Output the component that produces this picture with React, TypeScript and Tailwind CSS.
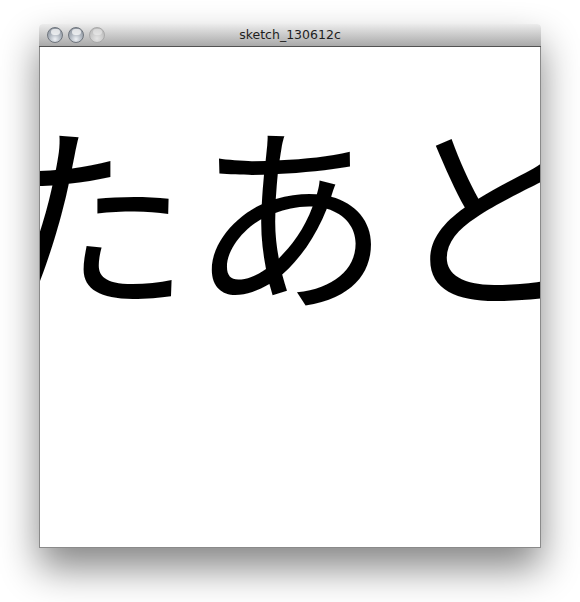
import * as React from "react"

function TrafficLight({ dim }: { dim?: boolean }) {
  return (
    <div
      className={`h-[16px] w-[16px] rounded-full border ${
        dim
          ? "border-[#a9a9a9] bg-[radial-gradient(circle_at_50%_75%,#e4e4e4_0%,#c6c6c6_55%,#b4b4b4_100%)]"
          : "border-[#6f757d] bg-[radial-gradient(circle_at_50%_80%,#eef1f5_0%,#aeb5be_45%,#838a94_100%)]"
      }`}
    >
      <div
        className={`mx-auto mt-[1px] h-[6px] w-[9px] rounded-full ${
          dim ? "bg-white/40" : "bg-white/70"
        }`}
      />
    </div>
  )
}

export default function App() {
  return (
    <div className="h-[602px] w-[580px] overflow-hidden bg-white pl-[39px] pt-[24px]">
      <div className="w-[502px] rounded-t-[4px] shadow-[0_20px_38px_rgba(0,0,0,0.48)]">
        {/* title bar */}
        <div className="relative flex h-[23px] items-center rounded-t-[4px] border-b border-[#525252] bg-gradient-to-b from-[#ececec] to-[#a9a9a9] px-[8px]">
          <div className="flex gap-[5px]">
            <TrafficLight />
            <TrafficLight />
            <TrafficLight dim />
          </div>
          <div className="absolute inset-x-0 top-0 flex h-[22px] items-center justify-center pt-[1px] font-['DejaVu_Sans',sans-serif] text-[12.5px] text-[#1e1e1e]">
            sketch_130612c
          </div>
        </div>
        {/* sketch canvas */}
        <div className="h-[501px] border-x border-b border-[#8a8a8a] bg-white">
          <div className="flex h-[500px] w-[500px] justify-center overflow-hidden">
            <div className="mt-[61px] whitespace-nowrap font-['Noto_Sans_CJK_JP',sans-serif] text-[200px] leading-none text-black">
              たあと
            </div>
          </div>
        </div>
      </div>
    </div>
  )
}
